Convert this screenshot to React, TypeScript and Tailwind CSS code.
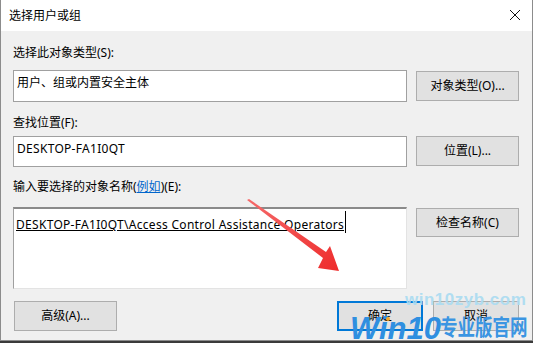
import React from 'react';

const FONT = { fontFamily: '"Noto Sans", "Noto Sans CJK SC", sans-serif' };

function Btn({ children, focused = false, className = '' }: { children: React.ReactNode; focused?: boolean; className?: string }) {
  return (
    <div
      className={
        'flex items-center justify-center bg-[#e1e1e1] text-[12px] text-black ' +
        (focused ? 'border-2 border-[#0078d7] ' : 'border border-[#adadad] ') +
        className
      }
    >
      {children}
    </div>
  );
}

export default function App() {
  return (
    <div className="relative h-[343px] w-[533px] overflow-hidden bg-[#3a3a3a]" style={FONT}>
      <div className="flex h-[341px] w-[533px] flex-col border border-t-0 border-[#8c8c8c] bg-[#f0f0f0]">
        {/* title bar */}
        <div className="flex h-[31px] shrink-0 items-center justify-between bg-white pl-[8px] pr-[11px]">
          <span className="text-[12px] text-black">选择用户或组</span>
          <svg width="12" height="12" viewBox="0 0 12 12" className="mt-[-1px]">
            <path d="M1 1 L11 11 M11 1 L1 11" stroke="#111" strokeWidth="1" />
          </svg>
        </div>

        {/* body */}
        <div className="flex flex-col pl-[12px] pr-[13px] pt-[14px] text-[12px] text-black">
          <div className="h-[16px] leading-[16px]">选择此对象类型(S):</div>
          <div className="mt-[9px] flex items-start gap-[9px]">
            <div className="h-[32px] w-[394px] border border-[#a0a0a0] bg-white px-[3px] pt-[4px] leading-[16px]">
              用户、组或内置安全主体
            </div>
            <Btn className="mt-[1px] h-[30px] w-[103px]">对象类型(O)...</Btn>
          </div>

          <div className="mt-[13px] h-[16px] leading-[16px]">查找位置(F):</div>
          <div className="mt-[5px] flex items-start gap-[9px]">
            <div className="h-[31px] w-[394px] border border-[#a0a0a0] bg-white px-[3px] pt-[4px] leading-[16px] tracking-[0.3px]">
              DESKTOP-FA1I0QT
            </div>
            <Btn className="h-[30px] w-[103px]">位置(L)...</Btn>
          </div>

          <div className="mt-[12px] h-[16px] leading-[16px]">
            输入要选择的对象名称(<span className="text-[#0066cc] underline">例如</span>)(E):
          </div>
          <div className="mt-[12px] flex items-start gap-[9px]">
            <div className="h-[82px] w-[394px] border-t-2 border-l border-r border-b border-t-[#8a8a8a] border-l-[#a0a0a0] border-r-[#e3e3e3] border-b-[#e3e3e3] bg-white pl-[2px] pt-[2px]">
              <div className="flex items-start">
                <span className="mt-[6px] leading-[16px] underline tracking-[0.3px]">
                  DESKTOP-FA1I0QT\Access Control Assistance Operators
                </span>
                <span className="ml-[1px] h-[22px] w-[1px] bg-black" />
              </div>
            </div>
            <Btn className="mt-[1px] h-[29px] w-[103px]">检查名称(C)</Btn>
          </div>

          <div className="mt-[12px] flex items-center">
            <Btn className="ml-[1px] h-[30px] w-[103px]">高级(A)...</Btn>
            <div className="flex-1" />
            <Btn focused className="h-[30px] w-[86px]">确定</Btn>
            <Btn className="ml-[10px] h-[30px] w-[86px]">取消</Btn>
          </div>
        </div>
      </div>

      {/* red annotation arrow */}
      <svg className="pointer-events-none absolute left-0 top-0" width="533" height="343">
        <defs>
          <linearGradient id="ar" x1="0" y1="0" x2="1" y2="1">
            <stop offset="0" stopColor="#f56a6a" />
            <stop offset="1" stopColor="#ee2b2b" />
          </linearGradient>
        </defs>
        <polygon
          points="247,200 249,199 326,252 330,246 339,271 318,268 323,258"
          fill="url(#ar)"
        />
      </svg>

      {/* watermark */}
      <div
        className="pointer-events-none absolute left-[405px] top-[287px] text-[17px] font-bold tracking-[0.5px] text-[#aadcf2] opacity-90"
        style={{ fontFamily: '"Liberation Sans", Arial, sans-serif' }}
      >
        win10zyb.com
      </div>
      <div
        className="pointer-events-none absolute left-[350px] top-[313px] text-[31px] font-bold italic leading-[31px] text-[#2f8fe0]"
        style={{ fontFamily: '"Liberation Sans", Arial, sans-serif' }}
      >
        Win10
      </div>
      <div
        className="pointer-events-none absolute left-[440px] top-[315px] origin-top scale-y-125 text-[17.5px] font-bold leading-[18px] text-[#3b95e2]"
        style={{ fontFamily: '"Noto Sans CJK SC", sans-serif' }}
      >
        专业版官网
      </div>
      <div className="pointer-events-none absolute left-[386px] top-[317px] h-[4px] w-[4px] rounded-full bg-[#f5a623]" />
    </div>
  );
}
